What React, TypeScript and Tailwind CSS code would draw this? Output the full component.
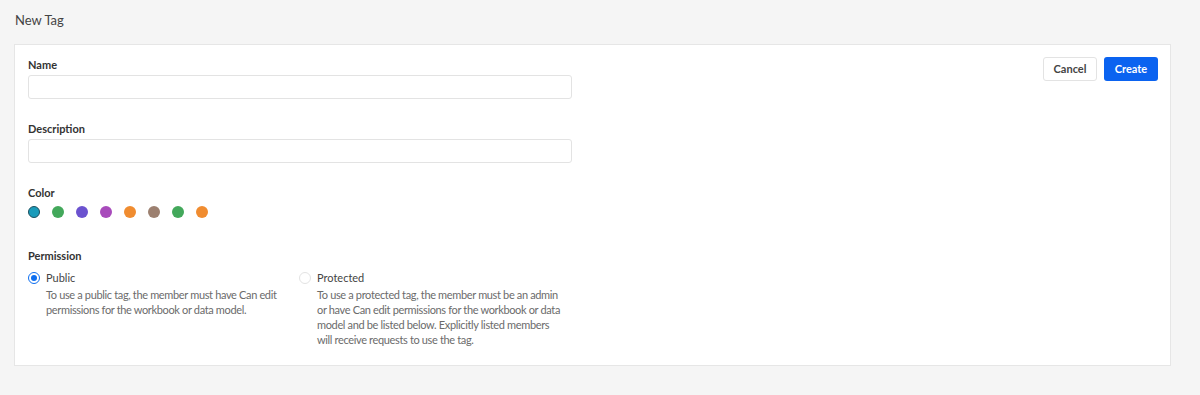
import React from "react";

const colors = ["#1a9bba", "#43a85b", "#6b52cf", "#a84bbb", "#f08c30", "#9c8070", "#43a85b", "#f08c30"];

export default function App() {
  return (
    <div className="h-[395px] bg-[#f5f5f5] px-[14px] pt-[12px] text-[#333]" style={{ fontFamily: "Lato, 'Open Sans', sans-serif" }}>
      <div className="h-[16px] text-[13px] leading-[16px] pl-[1px] text-[#444]">New Tag</div>
      <div className="mt-[16px] h-[322px] w-[1157px] border border-[#e6e6e6] bg-white flex">
        <div className="w-[557px] pl-[13px] pt-[12px]">
          <div className="text-[11px] font-bold leading-[16px] h-[16px]">Name</div>
          <div className="mt-[2px] h-[24px] w-[544px] rounded-[3px] border border-[#e3e3e3]" />
          <div className="mt-[22px] text-[11px] font-bold leading-[16px] h-[16px]">Description</div>
          <div className="mt-[2px] h-[24px] w-[544px] rounded-[3px] border border-[#e3e3e3]" />
          <div className="mt-[22px] text-[11px] font-bold leading-[16px] h-[16px]">Color</div>
          <div className="mt-[5px] flex gap-[12px]">
            {colors.map((c, i) => (
              <div
                key={i}
                className={i === 0 ? "h-[12px] w-[12px] rounded-full border-[1.5px] border-[#1d4f5e]" : "h-[12px] w-[12px] rounded-full"}
                style={{ backgroundColor: c }}
              />
            ))}
          </div>
          <div className="mt-[30px] text-[11px] font-bold leading-[16px] h-[16px]">Permission</div>
          <div className="mt-[7px] flex">
            <div className="flex w-[271px]">
              <div className="mt-[1px] h-[12px] w-[12px] rounded-full border border-[#0d6ef0] flex items-center justify-center">
                <div className="h-[6px] w-[6px] rounded-full bg-[#0d6ef0]" />
              </div>
              <div className="ml-[6px] w-[240px]">
                <div className="text-[11px] leading-[14px] text-[#444]">Public</div>
                <div className="mt-[2px] text-[11px] leading-[15px] tracking-[-0.35px] text-[#6b6b6b]">
                  To use a public tag, the member must have Can edit permissions for the workbook or data model.
                </div>
              </div>
            </div>
            <div className="flex">
              <div className="mt-[1px] h-[12px] w-[12px] rounded-full border border-[#e3e3e3]" />
              <div className="ml-[6px] w-[245px]">
                <div className="text-[11px] leading-[14px] text-[#444]">Protected</div>
                <div className="mt-[2px] text-[11px] leading-[15px] tracking-[-0.35px] text-[#6b6b6b]">
                  To use a protected tag, the member must be an admin or have Can edit permissions for the workbook or data model and be listed below. Explicitly listed members will receive requests to use the tag.
                </div>
              </div>
            </div>
          </div>
        </div>
        <div className="flex-1 flex justify-end items-start pt-[12px] pr-[12px] gap-[7px]">
          <button className="h-[24px] w-[54px] rounded-[3px] border border-[#e3e3e3] bg-white text-[11px] font-bold text-[#444]">Cancel</button>
          <button className="h-[24px] w-[54px] rounded-[3px] bg-[#0b63f0] text-[11px] font-bold text-white">Create</button>
        </div>
      </div>
    </div>
  );
}
